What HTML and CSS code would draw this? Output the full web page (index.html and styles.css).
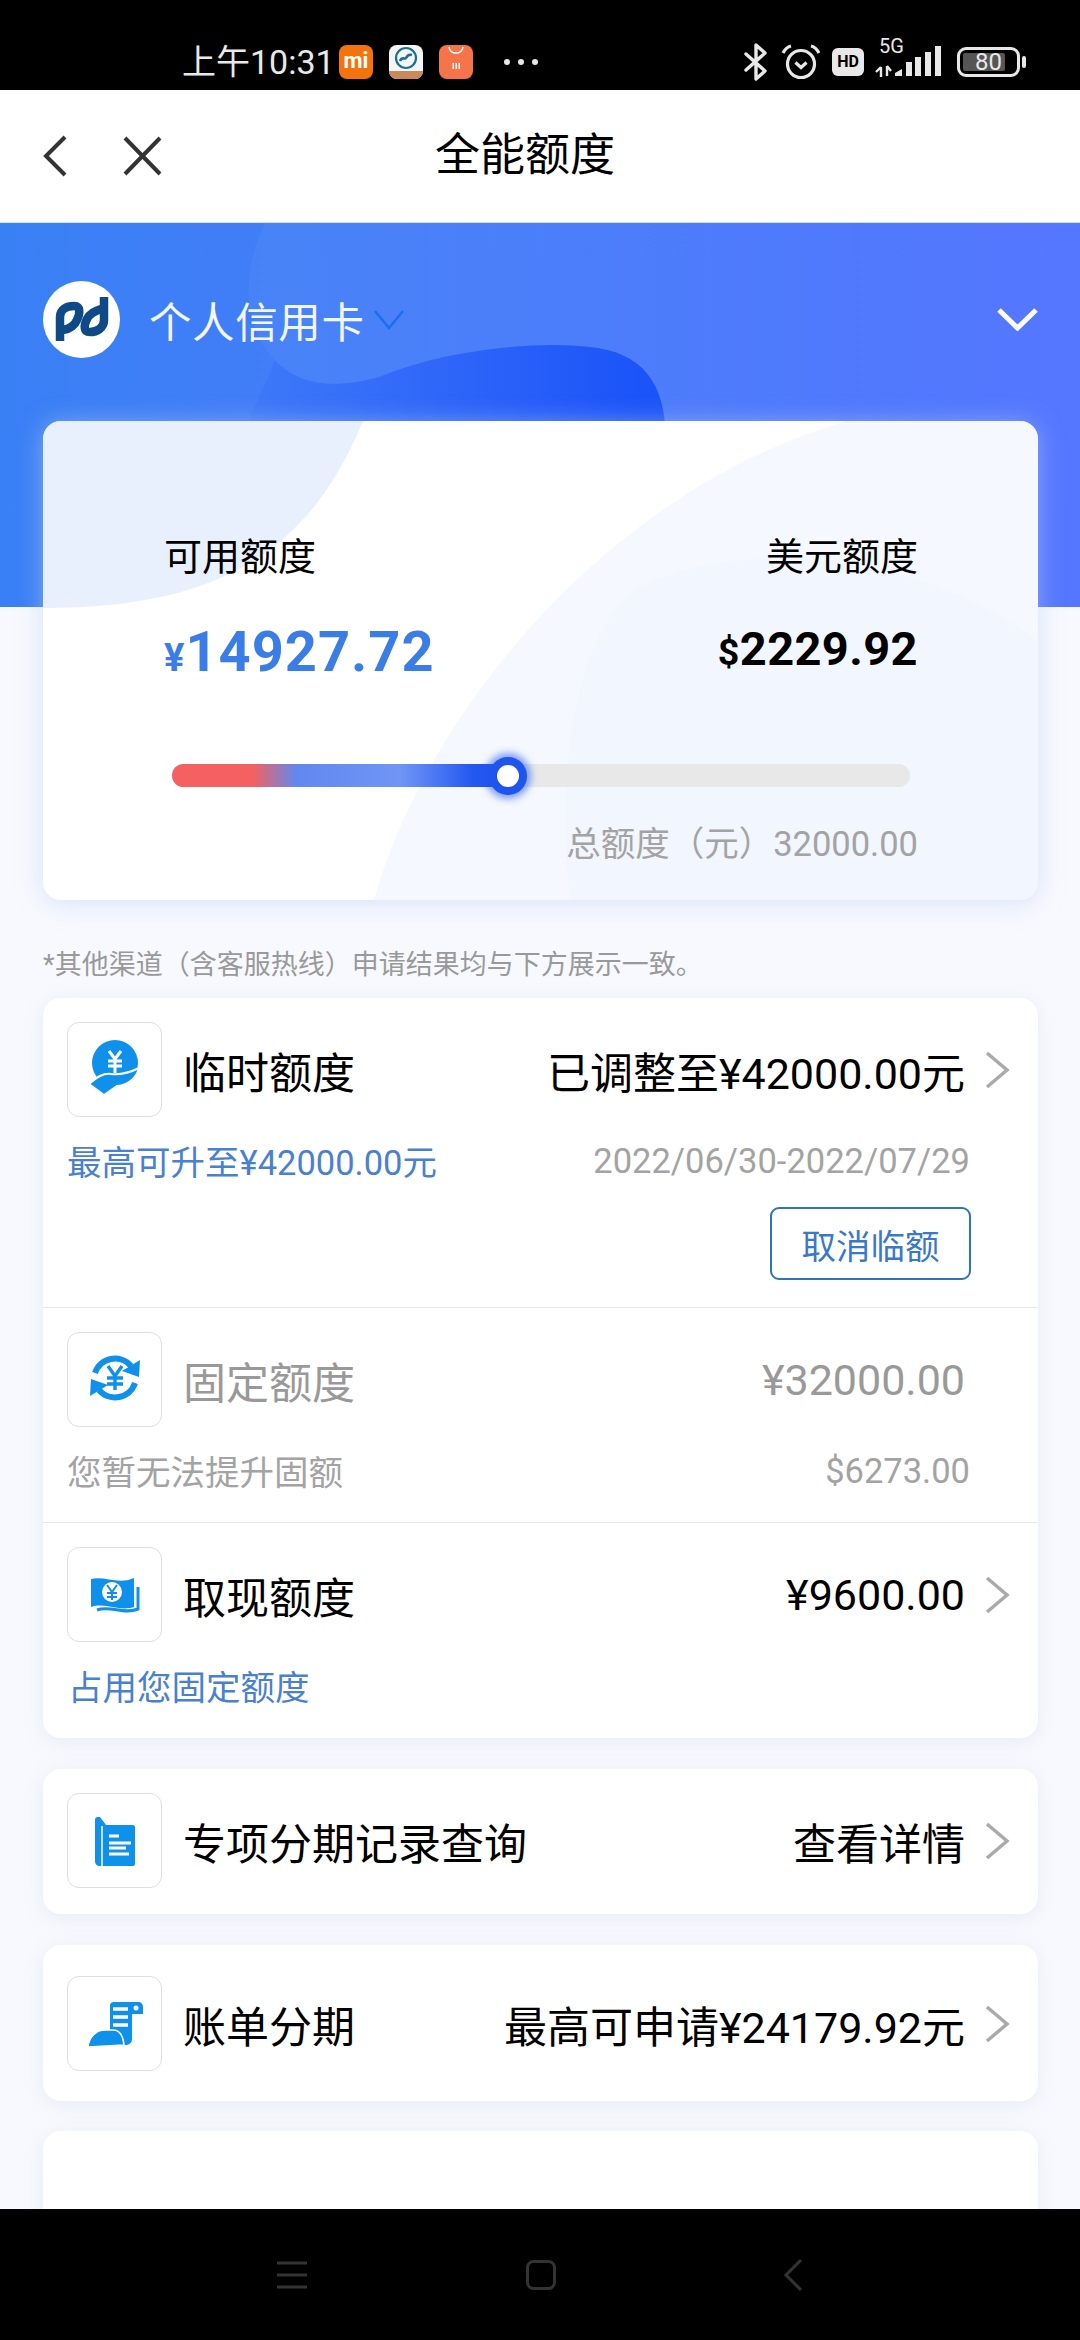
FILE: index.html
```html
<!DOCTYPE html>
<html lang="zh-CN">
<head>
    <meta charset="UTF-8">
    <meta name="viewport" content="width=device-width, initial-scale=1.0">
    <title>全能额度</title>
    <link rel="stylesheet" href="styles.css">
</head>
<body>
    <!-- 状态栏 -->
    <div class="status-bar">
        <span class="clock">上午10:31</span>
        <span class="app-icon app-mi">mi</span>
        <svg class="app-icon app-bank" viewBox="0 0 34 34">
            <rect width="34" height="34" fill="#f4f6f6"/>
            <circle cx="17" cy="13" r="10" fill="none" stroke="#1f6f8f" stroke-width="2.2"/>
            <path d="M11 16c2-5 5-1 6-3s3-4 6-3" fill="none" stroke="#1f6f8f" stroke-width="2.6"/>
            <rect y="26" width="34" height="8" fill="#c98a5a"/>
        </svg>
        <svg class="app-icon app-shop" viewBox="0 0 34 34">
            <rect width="34" height="34" fill="#f5744a"/>
            <path d="M10 2c1 8 13 8 14 0" fill="none" stroke="#fff" stroke-width="1.6"/>
            <rect x="13.5" y="18" width="1.5" height="6" fill="#fff"/>
            <rect x="16.5" y="18" width="1.5" height="6" fill="#fff"/>
            <rect x="19.5" y="18" width="1.5" height="6" fill="#fff"/>
        </svg>
        <span class="dots"><i></i><i></i><i></i></span>

        <div class="status-right">
            <svg class="bt" width="24" height="38" viewBox="0 0 24 38">
                <path d="M2 11l19 17-9 8V2l9 8L2 27" fill="none" stroke="#e8e8e8" stroke-width="3.4" stroke-linejoin="round" stroke-linecap="round"/>
            </svg>
            <svg class="alarm" width="40" height="36" viewBox="0 0 40 36">
                <circle cx="20" cy="20" r="13.5" fill="none" stroke="#e8e8e8" stroke-width="3.2"/>
                <path d="M14.5 18.5l5.5 5 5.5-5" fill="none" stroke="#e8e8e8" stroke-width="3.2"/>
                <path d="M2 9c2-4 4-6 8-7M38 9c-2-4-4-6-8-7" fill="none" stroke="#e8e8e8" stroke-width="3.2"/>
            </svg>
            <span class="hd">HD</span>
            <div class="signal">
                <span class="five-g">5G</span>
                <svg width="68" height="32" viewBox="0 0 68 32">
                    <path d="M6 21v10M1 26l5-5M12 20v10M12 20l4 5" fill="none" stroke="#e8e8e8" stroke-width="2.4"/>
                    <path d="M20 30v-3l7-4v7zM31 30V16h6v14zM40 30V11h6v19zM50 30V6h6v24zM60 30V0h6v30z" fill="#e8e8e8"/>
                </svg>
            </div>
            <div class="battery"><span class="battery-level"></span><span class="battery-num">80</span></div>
            <span class="battery-nub"></span>
        </div>
    </div>

    <main class="page">
        <!-- 标题栏 -->
        <header class="title-bar">
            <svg width="24" height="42" viewBox="0 0 24 42" class="back">
                <path d="M22 2L3 21l19 19" fill="none" stroke="#333" stroke-width="4"/>
            </svg>
            <svg width="39" height="40" viewBox="0 0 39 40" class="close">
                <path d="M2 2l35 36M37 2L2 38" fill="none" stroke="#333" stroke-width="4"/>
            </svg>
            <h1>全能额度</h1>
        </header>

        <section class="top">
            <svg class="top-bg" width="1080" height="384" viewBox="0 0 1080 384">
                <defs>
                    <linearGradient id="blob" gradientUnits="userSpaceOnUse" x1="200" y1="0" x2="640" y2="0">
                        <stop offset="0" stop-color="#1d55f8" stop-opacity="0"/>
                        <stop offset="1" stop-color="#1b54f8"/>
                    </linearGradient>
                    <linearGradient id="haze" gradientUnits="userSpaceOnUse" x1="240" y1="0" x2="900" y2="0">
                        <stop offset="0" stop-color="#fff" stop-opacity="0.04"/>
                        <stop offset="1" stop-color="#fff" stop-opacity="0"/>
                    </linearGradient>
                </defs>
                <path d="M265 0C245 40 238 100 275 137C300 165 340 165 379 154C450 125 540 118 590 124C650 130 672 170 664 240H1080V0Z" fill="url(#haze)"/>
                <path d="M275 137C300 165 340 165 379 154C450 125 540 118 590 124C650 130 672 170 664 240L660 384H120C200 300 250 200 275 137Z" fill="url(#blob)"/>
            </svg>

            <div class="account">
                <span class="logo">
                    <svg width="77" height="77" viewBox="0 0 77 77">
                        <path d="M17 60V36C17 28 24 25 31 25C38 25 37 33 34 39C31 46 26 48 20 49" fill="none" stroke="#0f4a86" stroke-width="8.500"/>
                        <path d="M61 16V39C61 47 54 51 47 51C40 51 41 44 44 38C47 32 52 30 58 28" fill="none" stroke="#0f4a86" stroke-width="8.500"/>
                    </svg>
                </span>
                <span class="account-name">个人信用卡</span>
                <svg width="30" height="20" viewBox="0 0 30 20">
                    <path d="M1 1l14 17L29 1" fill="none" stroke="#1a6ff0" stroke-width="2.500"/>
                </svg>
                <svg class="account-toggle" width="41" height="23" viewBox="0 0 41 23">
                    <path d="M2 2l18.500 18L39 2" fill="none" stroke="#fff" stroke-width="5"/>
                </svg>
            </div>

            <!-- 额度卡片 -->
            <div class="quota-card">
                <svg class="quota-bg" width="995" height="479" viewBox="0 0 995 479">
                    <path d="M0 0H320C270 120 190 187 0 187Z" fill="#e8f0fd"/>
                    <path d="M804 0H995V479H331C380 300 560 70 804 0Z" fill="#f5f8fe"/>
                    <path d="M527 479C510 330 540 210 590 170C680 120 860 120 995 220V479Z" fill="#f2f6fe"/>
                </svg>
                <div class="quota-inner">
                    <div class="quota-row">
                        <span class="quota-label">可用额度</span>
                        <span class="quota-label">美元额度</span>
                    </div>
                    <div class="quota-row amount-row">
                        <span class="amount amount-cny"><small>¥</small>14927.72</span>
                        <span class="amount amount-usd"><small>$</small>2229.92</span>
                    </div>
                    <div class="slider">
                        <div class="slider-fill"></div>
                        <div class="slider-thumb"></div>
                    </div>
                    <p class="quota-total">总额度（元）32000.00</p>
                </div>
            </div>
        </section>

        <p class="hint">*其他渠道（含客服热线）申请结果均与下方展示一致。</p>

        <section class="card">
            <div class="item item-temp">
                <div class="item-main">
                    <span class="item-icon">
                        <svg width="95" height="95" viewBox="0 0 95 95">
                            <circle cx="48" cy="41" r="23" fill="#0f90ea"/>
                            <path d="M42 29l6 8 6-8M48 37v14M41 39h14M41 44h14" fill="none" stroke="#fff" stroke-width="3"/>
                            <path d="M22 62c8-7 14-11 22-10 10 1 18-1 28-6-2 9-10 17-22 18l-13 9z" fill="#0f90ea" stroke="#fff" stroke-width="2"/>
                        </svg>
                    </span>
                    <span class="item-title">临时额度</span>
                    <span class="item-value">已调整至¥42000.00元</span>
                    <svg class="arrow" width="25" height="38" viewBox="0 0 25 38"><path d="M2 2l20 17L2 36" fill="none" stroke="#aaa" stroke-width="3.500"/></svg>
                </div>
                <div class="item-sub">
                    <span class="sub-link">最高可升至¥42000.00元</span>
                    <span class="sub-gray sub-right">2022/06/30-2022/07/29</span>
                </div>
                <div class="item-action">
                    <button class="cancel-btn">取消临额</button>
                </div>
            </div>

            <div class="item item-fixed">
                <div class="item-main">
                    <span class="item-icon">
                        <svg width="95" height="95" viewBox="0 0 95 95">
                            <path d="M28 41A21 21 0 0 1 64 34" fill="none" stroke="#0f90ea" stroke-width="6"/>
                            <path d="M55 39l17 6 1-17z" fill="#0f90ea"/>
                            <path d="M68 51A21 21 0 0 1 32 58" fill="none" stroke="#0f90ea" stroke-width="6"/>
                            <path d="M41 53l-17-6-1 17z" fill="#0f90ea"/>
                            <path d="M41 34l7 10 7-10M48 44v14M40 46h16M40 52h16" fill="none" stroke="#0f90ea" stroke-width="3.400"/>
                        </svg>
                    </span>
                    <span class="item-title gray">固定额度</span>
                    <span class="item-value gray">¥32000.00</span>
                    <span class="arrow-space"></span>
                </div>
                <div class="item-sub">
                    <span class="sub-gray">您暂无法提升固额</span>
                    <span class="sub-gray sub-right">$6273.00</span>
                </div>
            </div>

            <div class="item item-cash">
                <div class="item-main">
                    <span class="item-icon">
                        <svg width="95" height="95" viewBox="0 0 95 95">
                            <path d="M24 32c14-3 28 6 43-1v29c-15 5-28-5-43 0z" fill="#0f90ea"/>
                            <path d="M30 63c13-5 27 5 41-1V40" fill="none" stroke="#0f90ea" stroke-width="3"/>
                            <circle cx="45" cy="45" r="10" fill="#fff"/>
                            <path d="M40 38l5 7 5-7M45 45v8M40 46h10M40 50h10" fill="none" stroke="#0f90ea" stroke-width="2"/>
                        </svg>
                    </span>
                    <span class="item-title">取现额度</span>
                    <span class="item-value">¥9600.00</span>
                    <svg class="arrow" width="25" height="38" viewBox="0 0 25 38"><path d="M2 2l20 17L2 36" fill="none" stroke="#aaa" stroke-width="3.500"/></svg>
                </div>
                <div class="item-sub">
                    <span class="sub-link sub-indent">占用您固定额度</span>
                </div>
            </div>
        </section>

        <section class="card card-single">
            <div class="item-main">
                <span class="item-icon">
                    <svg width="95" height="95" viewBox="0 0 95 95">
                        <path d="M28 27c0-2 1-3 3-3h2l6 8h27c1 0 2 1 2 2v37c0 1-1 2-2 2H33c-3 0-5-2-5-5z" fill="#0f90ea"/>
                        <path d="M35 33v40" stroke="#fff" stroke-width="1.500"/>
                        <path d="M42 43h10M42 50h22M42 55h17M42 61h20" fill="none" stroke="#fff" stroke-width="3"/>
                    </svg>
                </span>
                <span class="item-title">专项分期记录查询</span>
                <span class="item-value">查看详情</span>
                <svg class="arrow" width="25" height="38" viewBox="0 0 25 38"><path d="M2 2l20 17L2 36" fill="none" stroke="#aaa" stroke-width="3.500"/></svg>
            </div>
        </section>

        <section class="card card-single card-bill">
            <div class="item-main">
                <span class="item-icon">
                    <svg width="95" height="95" viewBox="0 0 95 95">
                        <path d="M43 29c0-2 2-3 4-3h24c3 0 5 2 5 5v7h-11v25c0 4-3 6-7 6H43z" fill="#0f90ea"/>
                        <path d="M21 71c1-10 8-17 17-17h8c7 0 10 5 11 15z" fill="#0f90ea" stroke="#fff" stroke-width="1.500"/>
                        <path d="M46 33h15M46 41h15M46 49h15" stroke="#fff" stroke-width="3.500"/>
                        <circle cx="69" cy="32" r="2.500" fill="#fff"/>
                    </svg>
                </span>
                <span class="item-title">账单分期</span>
                <span class="item-value">最高可申请¥24179.92元</span>
                <svg class="arrow" width="25" height="38" viewBox="0 0 25 38"><path d="M2 2l20 17L2 36" fill="none" stroke="#aaa" stroke-width="3.500"/></svg>
            </div>
        </section>

        <section class="card card-empty"></section>
    </main>

    <!-- 底部导航 -->
    <nav class="nav-bar">
        <svg width="30" height="28" viewBox="0 0 30 28"><path d="M0 2h30M0 14h30M0 26h30" stroke="#333" stroke-width="3"/></svg>
        <svg width="30" height="30" viewBox="0 0 30 30"><rect x="1.500" y="1.500" width="27" height="27" rx="6" fill="none" stroke="#333" stroke-width="3"/></svg>
        <svg class="nav-back" width="20" height="34" viewBox="0 0 20 34"><path d="M18 2L3 17l15 15" fill="none" stroke="#333" stroke-width="3"/></svg>
    </nav>
</body>
</html>
```

FILE: styles.css
```css
* {
    box-sizing: border-box;
}
body {
    width: 1080px;
    height: 2340px;
    margin: 0;
    display: flex;
    flex-direction: column;
    overflow: hidden;
    background-color: #000;
    font-family: Roboto, "Noto Sans CJK SC", sans-serif;
}

/* 状态栏 */
.status-bar {
    height: 90px;
    flex: none;
    display: flex;
    align-items: center;
    padding: 33px 54px 0 182px;
    background-color: #000;
    color: #e8e8e8;
}
.clock {
    font-size: 34px;
    line-height: 40px;
    width: 157px;
    white-space: nowrap;
}
.app-icon {
    width: 34px;
    height: 34px;
    border-radius: 8px;
    margin-right: 16px;
    flex: none;
}
.app-mi {
    background-color: #f4730c;
    color: #fff;
    font-size: 22px;
    font-weight: 700;
    line-height: 32px;
    text-align: center;
}
.dots {
    display: flex;
    gap: 8px;
    margin-left: 15px;
}
.dots i {
    width: 6px;
    height: 6px;
    border-radius: 50%;
    background-color: #e8e8e8;
}
.status-right {
    margin-left: auto;
    display: flex;
    align-items: center;
}
.alarm {
    margin-left: 13px;
}
.hd {
    width: 32px;
    height: 28px;
    margin-left: 11px;
    border-radius: 6px;
    background-color: #e8e8e8;
    color: #000;
    font-size: 16px;
    font-weight: 700;
    line-height: 28px;
    text-align: center;
}
.signal {
    position: relative;
    width: 68px;
    height: 32px;
    margin-left: 11px;
}
.five-g {
    position: absolute;
    left: 4px;
    top: -11px;
    font-size: 20px;
    line-height: 22px;
}
.signal svg {
    display: block;
}
.battery {
    position: relative;
    width: 63px;
    height: 30px;
    margin-left: 14px;
    border: 3px solid #e8e8e8;
    border-radius: 9px;
}
.battery-level {
    position: absolute;
    left: 3px;
    top: 3px;
    bottom: 3px;
    width: 42px;
    border-radius: 2px;
    background-color: #555;
}
.battery-num {
    position: absolute;
    left: 0;
    right: 0;
    top: 0;
    font-size: 24px;
    line-height: 24px;
    text-align: center;
}
.battery-nub {
    width: 4px;
    height: 12px;
    margin-left: 2px;
    border-radius: 2px;
    background-color: #e8e8e8;
}

.page {
    flex: 1;
    overflow: hidden;
    background-color: #f7f9fe;
}

/* 标题栏 */
.title-bar {
    position: relative;
    height: 133px;
    padding-left: 43px;
    display: flex;
    align-items: center;
    background-color: #fff;
    border-bottom: 1px solid #cfe0f5;
}
.close {
    margin-left: 56px;
}
.title-bar h1 {
    position: absolute;
    left: 0;
    right: 30px;
    margin: 0;
    font-size: 45px;
    font-weight: 400;
    line-height: 60px;
    text-align: center;
    color: #000;
}

/* 顶部蓝色背景 */
.top {
    position: relative;
    padding: 58px 42px 0 43px;
    background: linear-gradient(90deg, #3a80f5, #5577ff) no-repeat;
    background-size: 100% 384px;
}
.top-bg {
    position: absolute;
    left: 0;
    top: 0;
}
.account {
    position: relative;
    height: 77px;
    display: flex;
    align-items: center;
}
.logo {
    width: 77px;
    height: 77px;
    border-radius: 50%;
    background-color: #fff;
}
.logo svg {
    display: block;
}
.account-name {
    margin-left: 29px;
    margin-right: 9px;
    font-size: 42.500px;
    letter-spacing: 0.6px;
    color: #f2f6ff;
}
.account-toggle {
    margin-left: auto;
}

/* 额度卡片 */
.quota-card {
    position: relative;
    height: 479px;
    margin-top: 63px;
    border-radius: 18px;
    background-color: #fff;
    overflow: hidden;
}
.top::after {
    content: "";
    position: absolute;
    left: 43px;
    right: 42px;
    top: 198px;
    height: 479px;
    border-radius: 18px;
    box-shadow: 0 2px 24px rgba(190, 205, 245, 0.55);
    pointer-events: none;
}
.quota-bg {
    position: absolute;
    left: 0;
    top: 0;
}
.quota-inner {
    position: relative;
    padding: 111px 120px 0 121px;
}
.quota-row {
    display: flex;
    align-items: center;
    justify-content: space-between;
}
.quota-label {
    font-size: 38px;
    line-height: 50px;
    color: #000;
}
.amount-row {
    height: 70px;
    margin-top: 35px;
}
.amount {
    font-weight: 700;
    white-space: nowrap;
}
.amount-cny {
    font-size: 56px;
    letter-spacing: 1px;
    color: #3b7de6;
}
.amount-usd {
    font-size: 47px;
    letter-spacing: 0.4px;
    color: #000;
    margin-top: -7px;
}
.amount small {
    font-size: 0.68em;
}
.amount-usd small {
    font-size: 0.8em;
}
.slider {
    position: relative;
    height: 23px;
    margin: 77px 8px 0;
    border-radius: 12px;
    background-color: #e8e8e8;
}
.slider-fill {
    width: 45.500%;
    height: 100%;
    border-radius: 12px 0 0 12px;
    background: linear-gradient(90deg, #f56060 0, #f56060 24%, #6288f0 37%, #7095f6 68%, #2257f0 90%);
}
.slider-thumb {
    position: absolute;
    left: 45.500%;
    top: 50%;
    width: 22px;
    height: 22px;
    margin: -11px 0 0 -11px;
    border-radius: 50%;
    background-color: #fff;
    box-shadow: 0 0 0 8px #1f55ee, 0 0 7px 12px rgba(31, 85, 238, 0.55);
}
.quota-total {
    margin: 37px 0 0;
    font-size: 34.500px;
    line-height: 40px;
    text-align: right;
    color: #a3a3a3;
}

.hint {
    margin: 47px 43px 15px;
    font-size: 27px;
    line-height: 36px;
    color: #999;
    white-space: nowrap;
}

/* 列表卡片 */
.card {
    margin: 31px 42px 0 43px;
    border-radius: 18px;
    background-color: #fff;
    box-shadow: 0 4px 18px rgba(190, 200, 220, 0.25);
}
.hint + .card {
    margin-top: 0;
}
.item {
    padding: 24px 0 31px 24px;
    border-bottom: 1px solid #e9e9e9;
}
.item-temp {
    padding-bottom: 27px;
}
.item-cash {
    padding-bottom: 32px;
    border-bottom: none;
}
.item-main {
    display: flex;
    align-items: center;
    padding-right: 28px;
}
.item-icon {
    width: 95px;
    height: 95px;
    flex: none;
    border: 1px solid #dedede;
    border-radius: 12px;
    background-color: #fff;
}
.item-icon svg {
    display: block;
    margin: -1px;
}
.item-title {
    margin-left: 21px;
    font-size: 43px;
    color: #000;
}
.item-value {
    margin-left: auto;
    font-size: 43px;
    color: #000;
    white-space: nowrap;
}
.gray {
    color: #999;
}
.arrow, .arrow-space {
    width: 25px;
    flex: none;
    margin-left: 20px;
}
.item-sub {
    display: flex;
    justify-content: space-between;
    align-items: center;
    height: 36px;
    margin-top: 28px;
    padding-right: 68px;
    font-size: 34.500px;
    line-height: 36px;
}
.sub-link {
    color: #4a80d0;
}
.sub-indent {
    margin-left: 1px;
}
.sub-gray {
    color: #a3a3a3;
}
.sub-right {
    margin-bottom: 5px;
}
.item-action {
    display: flex;
    justify-content: flex-end;
    margin-top: 26px;
    padding-right: 67px;
}
.cancel-btn {
    width: 201px;
    height: 73px;
    padding: 0;
    border: 2px solid #2a76b8;
    border-radius: 9px;
    background-color: #fff;
    color: #3a78c8;
    font-family: inherit;
    font-size: 34.500px;
}
.card-single {
    padding: 24px 0 26px 24px;
}
.card-bill {
    padding: 31px 0 30px 24px;
}
.card-empty {
    margin-top: 30px;
    height: 200px;
}

/* 底部导航 */
.nav-bar {
    height: 131px;
    flex: none;
    display: flex;
    align-items: center;
    padding-left: 277px;
    background-color: #000;
    gap: 219px;
}
.nav-back {
    margin-left: 8px;
}
```
